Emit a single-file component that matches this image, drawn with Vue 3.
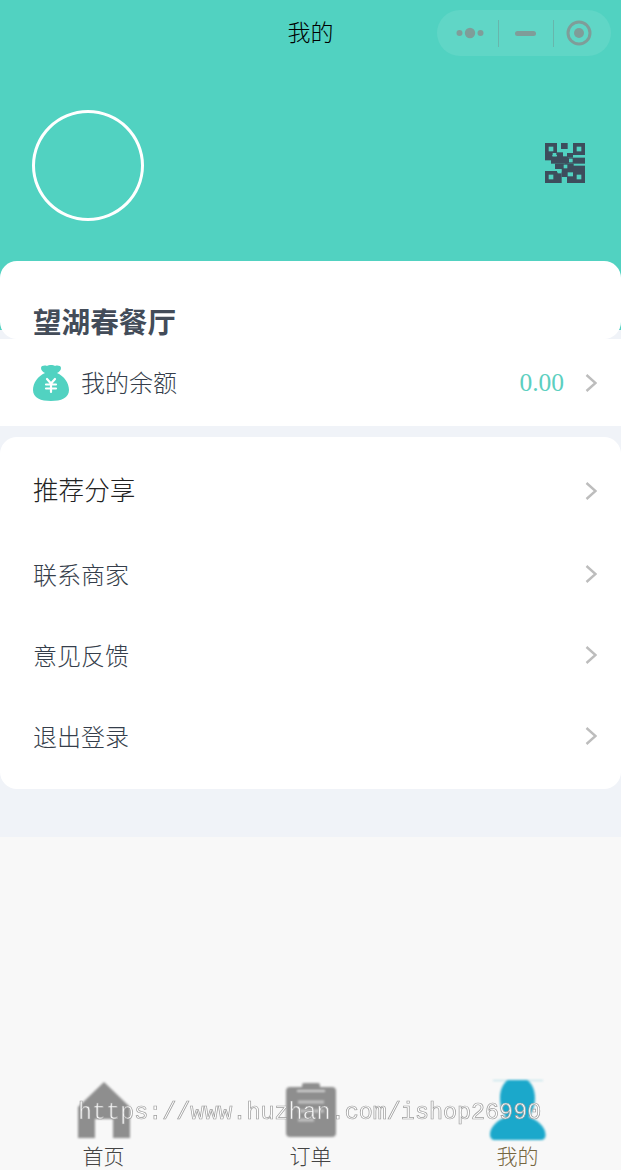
<script setup>
const menu = [
  { label: '推荐分享', first: true },
  { label: '联系商家' },
  { label: '意见反馈' },
  { label: '退出登录' }
]
const tabs = [
  { label: '首页', icon: 'home' },
  { label: '订单', icon: 'order' },
  { label: '我的', icon: 'user', active: true }
]
</script>

<template>
  <div class="page">
    <div class="hero">
      <div class="nav">
        <span></span>
        <span class="nav-title">我的</span>
        <div class="capsule">
          <svg class="cap-more" viewBox="0 0 28 12" width="28" height="12">
            <circle cx="3.500" cy="6" r="3" fill="#7f9d99" />
            <circle cx="14" cy="6" r="5.200" fill="#7f9d99" />
            <circle cx="24.500" cy="6" r="3" fill="#7f9d99" />
          </svg>
          <i class="cap-sep"></i>
          <i class="cap-dash"></i>
          <i class="cap-sep"></i>
          <svg class="cap-target" viewBox="0 0 26 26" width="26" height="26">
            <circle cx="13" cy="13" r="11" fill="none" stroke="#7f9d99" stroke-width="3" />
            <circle cx="13" cy="13" r="5" fill="#7f9d99" />
          </svg>
        </div>
      </div>
      <div class="profile">
        <div class="avatar"></div>
        <svg class="qr" viewBox="0 0 120 120" width="40" height="40">
          <g fill="#3d4d5c">
            <rect x="0" y="0" width="36" height="36" />
            <rect x="84" y="0" width="36" height="36" />
            <rect x="0" y="84" width="36" height="36" />
            <rect x="84" y="84" width="36" height="36" />
            <rect x="48" y="0" width="20" height="18" />
            <rect x="0" y="36" width="22" height="16" />
            <rect x="18" y="40" width="50" height="22" />
            <rect x="36" y="28" width="18" height="24" />
            <rect x="66" y="30" width="18" height="14" />
            <rect x="60" y="44" width="60" height="18" />
            <rect x="30" y="62" width="56" height="16" />
            <rect x="84" y="68" width="36" height="16" />
            <rect x="50" y="76" width="34" height="12" />
            <rect x="36" y="88" width="14" height="32" />
            <rect x="50" y="86" width="18" height="16" />
            <rect x="66" y="100" width="18" height="20" />
          </g>
          <g fill="#51d2c1">
            <rect x="11" y="11" width="14" height="14" />
            <rect x="95" y="11" width="14" height="14" />
            <rect x="11" y="95" width="14" height="14" />
            <rect x="95" y="95" width="14" height="14" />
            <rect x="23" y="30" width="11" height="10" />
            <rect x="72" y="47" width="11" height="11" />
            <rect x="38" y="80" width="11" height="11" />
            <rect x="56" y="65" width="11" height="11" />
          </g>
        </svg>
      </div>
    </div>

    <div class="body">
      <div class="shop-card">
        <span class="shop-name">望湖春餐厅</span>
      </div>

      <div class="balance">
        <svg class="bag" viewBox="0 0 36 36" width="36" height="36">
          <path d="M8 3C8 .5 12 0 14 1c2-1.200 6-1.200 8 0 2-1 6-.5 6 2 0 2.500-2 4-4 5 7 3 12 10 12 17 0 8-8 11-18 11S0 33 0 25c0-7 5-14 12-17-2-1-4-2.500-4-5z" fill="#51d2c1" />
          <path d="M14 14l4 4.500 4-4.500M13 19.500h10M13 23.500h10M18 19v8" fill="none" stroke="#fff" stroke-width="2.200" stroke-linecap="round" />
        </svg>
        <span class="balance-label">我的余额</span>
        <span class="balance-value">0.00</span>
        <svg class="chev" viewBox="0 0 12 18" width="12" height="18">
          <path d="M1.500 1l9 8-9 8" fill="none" stroke="#bdbdbd" stroke-width="2.400" />
        </svg>
      </div>

      <div class="menu">
        <div v-for="item in menu" :key="item.label" class="menu-row" :class="{ first: item.first }">
          <span class="menu-label">{{ item.label }}</span>
          <svg class="chev" viewBox="0 0 12 18" width="12" height="18">
            <path d="M1.500 1l9 8-9 8" fill="none" stroke="#bdbdbd" stroke-width="2.400" />
          </svg>
        </div>
      </div>
    </div>

    <div class="tabbar">
      <div v-for="tab in tabs" :key="tab.label" class="tab" :class="{ active: tab.active }">
        <div class="tab-icon">
          <svg v-if="tab.icon === 'home'" viewBox="0 0 52 56" width="52" height="56">
            <path d="M26 0L52 25V56H35V37H17V56H0V25z" fill="#8e8e8e" />
          </svg>
          <svg v-else-if="tab.icon === 'order'" viewBox="0 0 50 54" width="50" height="54">
            <path d="M4 4h12v-2q0-2 2-2h14q2 0 2 2v2h12q4 0 4 4v42q0 4-4 4H4q-4 0-4-4V8q0-4 4-4z" fill="#8e8e8e" />
            <path d="M11 8h28" stroke="#d8d8d8" stroke-width="2" />
            <path d="M12 19h26M12 28h26M12 37h16" stroke="#c4c4c4" stroke-width="3" />
          </svg>
          <svg v-else viewBox="0 0 56 60" width="56" height="60">
            <path d="M3 .5h50" stroke="#b5dfe8" stroke-width="1" />
            <path d="M18 0h19c5 3 8 10 8 18 0 8-3 14-6 19 8 3 16 9 16.500 17 .5 4-1.500 6-4.500 6H5c-3 0-5-2-5-6 .5-8 8-14 16-17-4-5-6-11-6-19 0-8 3-15 8-18z" fill="#1ba8cb" />
          </svg>
        </div>
        <span class="tab-label">{{ tab.label }}</span>
      </div>
    </div>

    <div class="watermark">https://www.huzhan.com/ishop26990</div>
  </div>
</template>

<style scoped>
.page {
  position: relative;
  width: 621px;
  height: 1170px;
  overflow: hidden;
  display: flex;
  flex-direction: column;
  background: #f8f8f8;
  font-family: "Noto Sans CJK SC", "Liberation Sans", sans-serif;
  color: #434c59;
}
.hero {
  height: 330px;
  background: #51d2c1;
  box-sizing: border-box;
  padding-top: 10px;
}
.nav {
  display: grid;
  grid-template-columns: 1fr auto 1fr;
  align-items: center;
  height: 46px;
}
.nav-title {
  font-size: 23px;
  line-height: 42px;
  margin-bottom: 4px;
  font-weight: 300;
  color: #000;
}
.capsule {
  justify-self: end;
  margin-right: 10px;
  width: 174px;
  height: 46px;
  border-radius: 23px;
  background: rgba(255, 255, 255, 0.09);
  display: flex;
  align-items: center;
  box-sizing: border-box;
  padding-left: 19px;
}
.cap-more,
.cap-target,
.cap-sep,
.cap-dash {
  flex: none;
}
.cap-sep {
  width: 1px;
  height: 27px;
  background: rgba(110, 150, 145, 0.5);
}
.cap-more + .cap-sep {
  margin-left: 14px;
}
.cap-dash {
  width: 21px;
  height: 5px;
  border-radius: 3px;
  background: #7f9d99;
  margin: 0 17px 0 16px;
}
.cap-target {
  margin-left: 12px;
}
.profile {
  display: flex;
  align-items: center;
  justify-content: space-between;
  padding: 54px 36px 0 32px;
}
.avatar {
  width: 112px;
  height: 111px;
  box-sizing: border-box;
  border: 3.500px solid #fff;
  border-radius: 50%;
}
.qr {
  display: block;
  filter: blur(0.5px);
  margin-top: -6px;
}
.body {
  background: #f0f3f8;
  height: 507px;
  flex: none;
}
.shop-card {
  margin-top: -69px;
  height: 78px;
  box-sizing: border-box;
  background: #fff;
  border-radius: 17px;
  padding: 41px 0 0 33px;
  position: relative;
}
.shop-name {
  display: block;
  font-size: 28.6px;
  line-height: 38px;
  font-weight: 700;
  color: #434c59;
}
.balance {
  height: 87px;
  background: #fff;
  display: flex;
  align-items: center;
  padding: 0 24px 0 33px;
  margin-bottom: 11px;
}
.bag {
  flex: none;
}
.balance-label {
  margin: 0 0 2px 12px;
  font-size: 24px;
  font-weight: 300;
  color: #353e4b;
}
.balance-value {
  margin-left: auto;
  margin-right: 21px;
  font-family: "Liberation Serif", serif;
  font-size: 25.500px;
  color: #5ccfc0;
}
.chev {
  display: block;
  flex: none;
}
.menu {
  background: #fff;
  border-radius: 17px;
  padding: 10px 24px 12px 33px;
}
.menu-row {
  height: 81px;
  display: flex;
  align-items: center;
  justify-content: space-between;
  font-size: 24px;
  font-weight: 300;
  color: #353e4b;
}
.menu-row .chev {
  margin-bottom: 2px;
}
.menu-label {
  margin-bottom: 2px;
}
.menu-row.first {
  height: 87px;
  font-size: 25.6px;
  color: #222;
}
.menu-row.first .chev {
  margin-bottom: 0;
}
.menu-row.first .menu-label {
  margin-bottom: 4px;
}
.tabbar {
  margin-top: auto;
  display: grid;
  grid-template-columns: repeat(3, 207px);
  height: 90px;
  background: #f8f8f8;
}
.tab {
  display: flex;
  flex-direction: column;
  align-items: center;
}
.tab-icon {
  height: 60px;
  display: flex;
  align-items: center;
  justify-content: center;
  margin-bottom: 1px;
}
.tab-icon svg {
  display: block;
  filter: blur(1px);
}
.tab-label {
  font-size: 21px;
  line-height: 28px;
  font-weight: 300;
  color: #444;
}
.tab.active .tab-label {
  color: #76663f;
}
.watermark {
  position: absolute;
  left: 78px;
  top: 1099px;
  font-family: "Liberation Mono", monospace;
  font-size: 23.4px;
  line-height: 28px;
  white-space: nowrap;
  color: rgba(255, 255, 255, 0.9);
  -webkit-text-stroke: 0.7px #9b9b9b;
  will-change: transform;
}
</style>
